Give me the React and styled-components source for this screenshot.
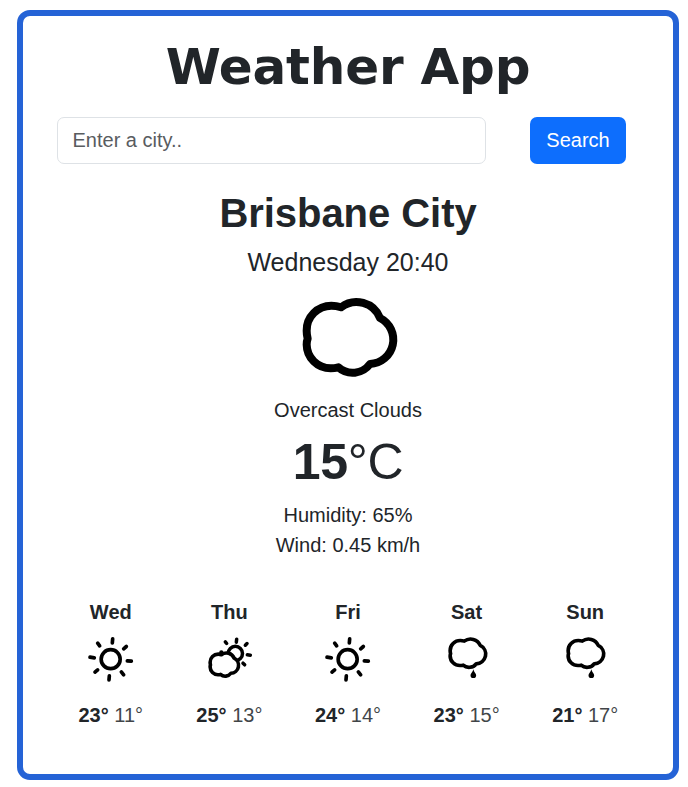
import React from "react";
import styled, { createGlobalStyle } from "styled-components";

const GlobalStyle = createGlobalStyle`
  *, *::before, *::after { box-sizing: border-box; }
  body {
    margin: 0;
    background: #fff;
    color: #212529;
    font-family: "Liberation Sans", Arial, sans-serif;
    font-size: 20px;
    line-height: 30px;
  }
`;

const Card = styled.main`
  width: 662px;
  height: 770px;
  margin: 10px 0 0 17px;
  padding: 20px 34px 0;
  border: 6px solid #2563d6;
  border-radius: 13px;
  display: flex;
  flex-direction: column;
  align-items: center;
`;

const Title = styled.h1`
  margin: 1px 0 20px;
  font-family: Verdana, "DejaVu Sans", sans-serif;
  font-size: 50px;
  font-weight: 700;
  line-height: 60px;
  letter-spacing: -0.2px;
`;

const SearchForm = styled.form`
  align-self: stretch;
  display: flex;
  gap: 44px;
`;

const CityInput = styled.input`
  width: 429px;
  height: 47px;
  padding: 0 14.5px 1px;
  border: 1px solid #dee2e6;
  border-radius: 7px;
  font: inherit;
  color: #212529;
  background: #fff;
  outline: none;
  &::placeholder {
    color: #595c5f;
    opacity: 1;
  }
`;

const SearchButton = styled.button`
  width: 96px;
  height: 47px;
  padding: 0 0 1px;
  border: 0;
  border-radius: 7px;
  background: #0d6efd;
  color: #fff;
  font: inherit;
`;

const City = styled.h2`
  margin: 25px 0 6px;
  font-size: 40px;
  font-weight: 700;
  line-height: 48px;
  letter-spacing: -0.05px;
`;

const LocalTime = styled.div`
  font-size: 25px;
  line-height: 38px;
`;

const CurrentIcon = styled.svg`
  width: 120px;
  height: 100px;
  margin: 4px 0 10px 4px;
`;

const Temperature = styled.div`
  margin: 5px 0;
  font-size: 50px;
  line-height: 65px;
  letter-spacing: -0.3px;
`;

const Forecast = styled.section`
  width: 593px;
  margin-top: 37px;
  display: grid;
  grid-template-columns: repeat(5, 1fr);
`;

const Day = styled.article`
  display: flex;
  flex-direction: column;
  align-items: center;
`;

const DayIcon = styled.svg`
  width: 50px;
  height: 50px;
  margin: 7px 0 16px;
`;

const Low = styled.span`
  opacity: 0.85;
`;

const CLOUD =
  "M53 160Q50 148 50 136A74 74 0 0 1 124 61Q139 61 153 66A76 76 0 0 1 270 98A73 73 0 0 1 240 236A64.5 64.5 0 0 1 145 246Q133 249 122 249A72 72 0 0 1 50 178Q50 168 53 160Z";

function SunIcon() {
  return (
    <DayIcon viewBox="77 132.5 150 150" fill="none" stroke="#000" strokeLinecap="round">
      <circle cx="151" cy="208" r="28.5" strokeWidth="11" />
      <path
        strokeWidth="11"
        d="M157 147L156 159M198 170L190 177M201 213L213 214M183 246L190 255M147 258L146 270M112 240L104 247M89 202L102 204M112 160L118 168"
      />
    </DayIcon>
  );
}

function PartlyCloudyIcon() {
  return (
    <DayIcon viewBox="432 132.5 150 150" fill="none" stroke="#000" strokeLinecap="round">
      <circle cx="526" cy="191" r="21.5" strokeWidth="10.5" />
      <path
        strokeWidth="10.5"
        d="M530 148L529 157M496 156L500 161M561 161L556 166M562 195L571 196M549 220L554 225"
      />
      <path
        d={CLOUD}
        transform="translate(434 173) scale(.328)"
        fill="#fff"
        strokeWidth="33"
        strokeLinejoin="round"
      />
      <circle cx="484" cy="188" r="6.5" fill="#000" stroke="none" />
    </DayIcon>
  );
}

function RainIcon() {
  return (
    <DayIcon viewBox="424 132.5 150 150">
      <path
        d={CLOUD}
        transform="translate(428 127.6) scale(.41 .4)"
        fill="none"
        stroke="#000"
        strokeWidth="27"
        strokeLinejoin="round"
      />
      <path d="M518 238C516 247 509.5 250 509.5 256A8.5 8.5 0 0 0 526.5 256C526.5 250 520 247 518 238Z" />
    </DayIcon>
  );
}

const days = [
  { name: "Wed", Icon: SunIcon, high: 23, low: 11 },
  { name: "Thu", Icon: PartlyCloudyIcon, high: 25, low: 13 },
  { name: "Fri", Icon: SunIcon, high: 24, low: 14 },
  { name: "Sat", Icon: RainIcon, high: 23, low: 15 },
  { name: "Sun", Icon: RainIcon, high: 21, low: 17 },
];

export default function App() {
  return (
    <>
      <GlobalStyle />
      <Card>
        <Title>Weather App</Title>
        <SearchForm onSubmit={(event) => event.preventDefault()}>
          <CityInput type="text" placeholder="Enter a city.." />
          <SearchButton type="submit">Search</SearchButton>
        </SearchForm>
        <City>Brisbane City</City>
        <LocalTime>Wednesday 20:40</LocalTime>
        <CurrentIcon viewBox="0 -1 360 300">
          <path d={CLOUD} fill="none" stroke="#000" strokeWidth="24" strokeLinejoin="round" />
        </CurrentIcon>
        <div>Overcast Clouds</div>
        <Temperature>
          <strong>15</strong>°C
        </Temperature>
        <div>Humidity: 65%</div>
        <div>Wind: 0.45 km/h</div>
        <Forecast>
          {days.map(({ name, Icon, high, low }) => (
            <Day key={name}>
              <strong>{name}</strong>
              <Icon />
              <div>
                <strong>{high}°</strong> <Low>{low}°</Low>
              </div>
            </Day>
          ))}
        </Forecast>
      </Card>
    </>
  );
}
